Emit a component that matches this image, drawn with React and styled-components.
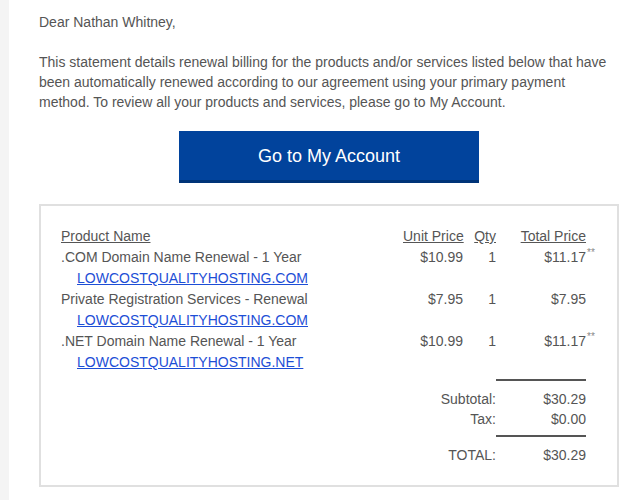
import React from 'react'
import styled, { createGlobalStyle } from 'styled-components'

const GlobalStyle = createGlobalStyle`
    body {
        margin: 0;
        background: #fff;
        font-family: "Liberation Sans", Arial, sans-serif;
    }
`

const items = [
    { id: 1, name: '.COM Domain Name Renewal - 1 Year', domain: 'LOWCOSTQUALITYHOSTING.COM', unit: '$10.99', qty: 1, total: '$11.17', mark: true },
    { id: 2, name: 'Private Registration Services - Renewal', domain: 'LOWCOSTQUALITYHOSTING.COM', unit: '$7.95', qty: 1, total: '$7.95', mark: false },
    { id: 3, name: '.NET Domain Name Renewal - 1 Year', domain: 'LOWCOSTQUALITYHOSTING.NET', unit: '$10.99', qty: 1, total: '$11.17', mark: true },
]

function App() {
    return (
        <Page>
            <GlobalStyle />
            <Content>
                <Text>Dear Nathan Whitney,</Text>
                <Text $gap>
                    This statement details renewal billing for the products and/or services listed below that have
                    been automatically renewed according to our agreement using your primary payment
                    method. To review all your products and services, please go to My Account.
                </Text>
                <ButtonRow>
                    <AccountButton href="#">Go to My Account</AccountButton>
                </ButtonRow>
                <Statement>
                    <Table>
                        <colgroup>
                            <col style={{ width: 342 }} />
                            <col style={{ width: 60 }} />
                            <col style={{ width: 33 }} />
                            <col style={{ width: 90 }} />
                        </colgroup>
                        <thead>
                            <tr>
                                <Th>Product Name</Th>
                                <Th $right>Unit Price</Th>
                                <Th $right>Qty</Th>
                                <Th $right>Total Price</Th>
                            </tr>
                        </thead>
                        <tbody>
                            {items.map((item) => (
                                <tr key={item.id}>
                                    <Td>
                                        <div>{item.name}</div>
                                        <DomainLink href="#">{item.domain}</DomainLink>
                                    </Td>
                                    <Td $right>{item.unit}</Td>
                                    <Td $right>{item.qty}</Td>
                                    <Td $right>
                                        <Amount>
                                            {item.total}
                                            {item.mark && <Mark>**</Mark>}
                                        </Amount>
                                    </Td>
                                </tr>
                            ))}
                            <tr>
                                <td colSpan={3} />
                                <RuleCell $h={6} />
                            </tr>
                            <tr>
                                <SumLabel colSpan={3} $top={8}>Subtotal:</SumLabel>
                                <SumValue $top={8}>$30.29</SumValue>
                            </tr>
                            <tr>
                                <SumLabel colSpan={3}>Tax:</SumLabel>
                                <SumValue>$0.00</SumValue>
                            </tr>
                            <tr>
                                <td colSpan={3} />
                                <RuleCell $h={6} />
                            </tr>
                            <tr>
                                <SumLabel colSpan={3} $top={8}>TOTAL:</SumLabel>
                                <SumValue $top={8}>$30.29</SumValue>
                            </tr>
                        </tbody>
                    </Table>
                </Statement>
            </Content>
        </Page>
    )
}

export default App

const Page = styled.div`
    min-height: 500px;
    border-left: 9px solid #f4f4f4;
    background: #fff;
`

const Content = styled.div`
    padding: 12px 23px 20px 30px;
    color: #555;
    font-size: 14px;
    line-height: 20px;
`

const Text = styled.p`
    margin: ${(p) => (p.$gap ? '20px' : '0')} 0 0;
`

const ButtonRow = styled.div`
    display: flex;
    justify-content: center;
    margin-top: 19px;
`

const AccountButton = styled.a`
    display: flex;
    align-items: center;
    justify-content: center;
    width: 300px;
    height: 49px;
    background: #01439c;
    border-bottom: 3px solid #003478;
    color: #fff;
    font-size: 18px;
    text-decoration: none;
`

const Statement = styled.div`
    margin-top: 21px;
    border: 2px solid #e0e0e0;
    padding: 20px 31px 20px 20px;
`

const Table = styled.table`
    border-collapse: collapse;
    border-spacing: 0;
    table-layout: fixed;
    width: 525px;
    font-size: 14px;
    line-height: 21px;
    color: #555;
`

const Th = styled.th`
    padding: 0;
    font-weight: normal;
    text-decoration: underline;
    text-align: ${(p) => (p.$right ? 'right' : 'left')};
    white-space: nowrap;
`

const Td = styled.td`
    padding: 0;
    vertical-align: top;
    text-align: ${(p) => (p.$right ? 'right' : 'left')};
    white-space: nowrap;
`

const DomainLink = styled.a`
    display: block;
    padding-left: 16px;
    color: #1d4ed6;
    text-decoration: underline;
`

const Amount = styled.span`
    position: relative;
`

const Mark = styled.span`
    position: absolute;
    left: 100%;
    top: -1px;
    padding-left: 1px;
    font-size: 10px;
    line-height: 10px;
    color: #888;
`

const RuleCell = styled.td`
    padding: 0;
    height: ${(p) => p.$h}px;
    border-bottom: 2px solid #555;
`

const SumLabel = styled.td`
    padding: ${(p) => p.$top || 0}px 0 0;
    text-align: right;
    line-height: 20px;
`

const SumValue = styled.td`
    padding: ${(p) => p.$top || 0}px 0 0;
    text-align: right;
    line-height: 20px;
`
